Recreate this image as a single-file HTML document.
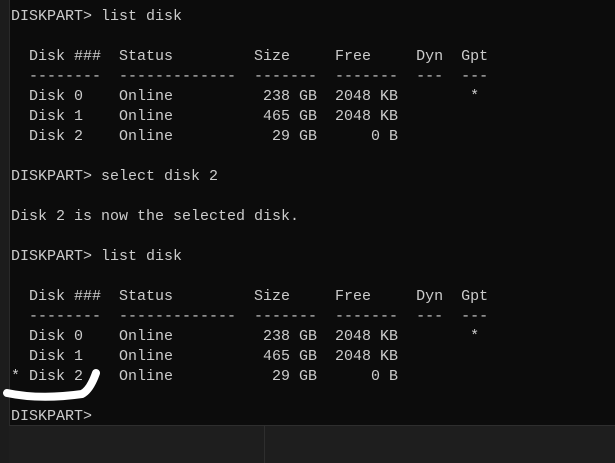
<!DOCTYPE html>
<html><head><meta charset="utf-8"><style>
html,body{margin:0;padding:0;}
body{width:615px;height:463px;background:#1e1e1e;position:relative;overflow:hidden;}
.left{position:absolute;left:0;top:0;width:9px;height:463px;background:#1c1c1c;}
.term{position:absolute;left:9px;top:0;width:606px;height:425px;background:#0c0c0c;border-left:1px solid #2a2a2a;border-bottom:1px solid #2e2e2e;}
pre{position:absolute;left:11px;top:7px;margin:0;font-family:"Liberation Mono",monospace;font-size:15px;line-height:20px;color:#cccccc;}
.div{position:absolute;left:264px;top:426px;width:1px;height:37px;background:#2e2e2e;}
svg{position:absolute;left:0;top:0;}
</style></head><body>
<div class="left"></div>
<div class="term"></div>
<pre>DISKPART&gt; list disk

  Disk ###  Status         Size     Free     Dyn  Gpt
  --------  -------------  -------  -------  ---  ---
  Disk 0    Online          238 GB  2048 KB        *
  Disk 1    Online          465 GB  2048 KB
  Disk 2    Online           29 GB      0 B

DISKPART&gt; select disk 2

Disk 2 is now the selected disk.

DISKPART&gt; list disk

  Disk ###  Status         Size     Free     Dyn  Gpt
  --------  -------------  -------  -------  ---  ---
  Disk 0    Online          238 GB  2048 KB        *
  Disk 1    Online          465 GB  2048 KB
* Disk 2    Online           29 GB      0 B

DISKPART&gt;</pre>
<div class="div"></div>
<svg width="615" height="463"><path d="M7 393 Q40 400 82 394 Q90 390 96 373" stroke="#fff" stroke-width="8" fill="none" stroke-linecap="round"/></svg>
</body></html>
